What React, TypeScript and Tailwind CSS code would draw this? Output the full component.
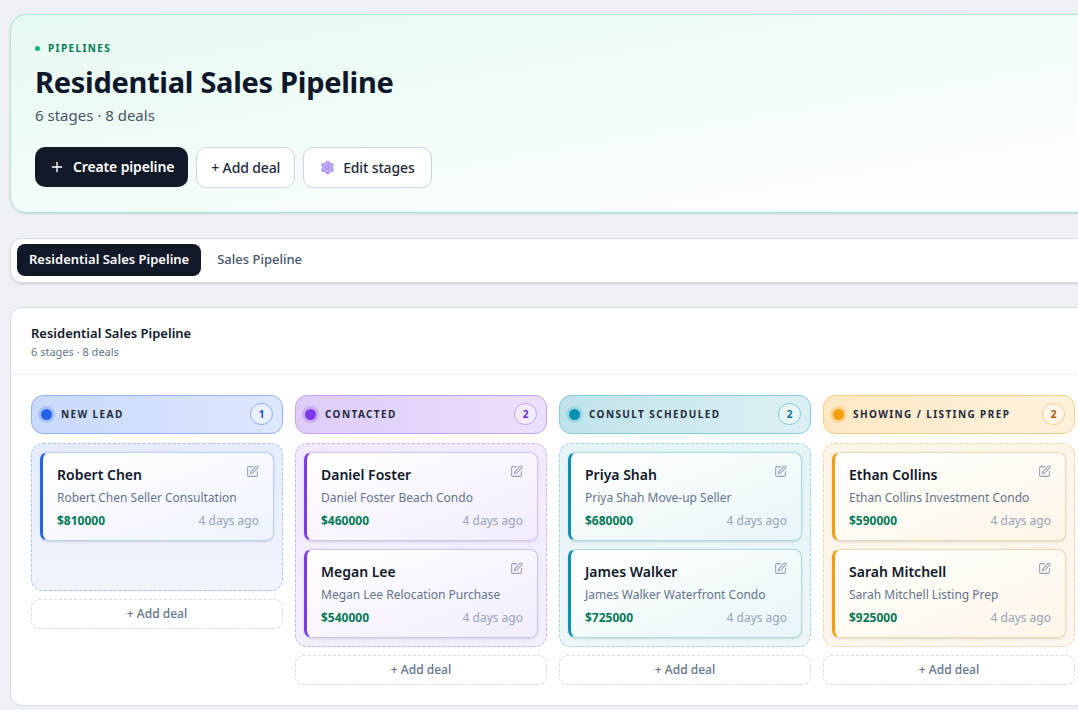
import { Plus, Settings, SquarePen } from "lucide-react";

type Deal = { name: string; title: string; amount: string };
type Stage = {
  label: string;
  deals: Deal[];
  head: string;
  dot: string;
  ring: string;
  badge: string;
  zone: string;
  card: string;
};

const stages: Stage[] = [
  {
    label: "NEW LEAD",
    head: "bg-gradient-to-r from-[#c9d9fb] to-[#dde7fd] border-[#8fb0f5]",
    dot: "bg-[#2563eb] ring-[#a9c1f7]",
    ring: "border-l-[#2563eb]",
    badge: "border-[#8fb0f5] text-[#1d4ed8]",
    zone: "border-[#a9c1f3] bg-gradient-to-b from-[#e4ecfc] to-[#f1f4fb]",
    card: "border-[#bccdf3] from-white to-[#eef3fd]",
    deals: [{ name: "Robert Chen", title: "Robert Chen Seller Consultation", amount: "$810000" }],
  },
  {
    label: "CONTACTED",
    head: "bg-gradient-to-r from-[#ddccf8] to-[#ebe0fb] border-[#c2a3f2]",
    dot: "bg-[#7c3aed] ring-[#c9aef5]",
    ring: "border-l-[#7c3aed]",
    badge: "border-[#c2a3f2] text-[#6d28d9]",
    zone: "border-[#c8b0f0] bg-gradient-to-b from-[#f1eafd] to-[#f3effb]",
    card: "border-[#d2c1f1] from-white to-[#f2ecfd]",
    deals: [
      { name: "Daniel Foster", title: "Daniel Foster Beach Condo", amount: "$460000" },
      { name: "Megan Lee", title: "Megan Lee Relocation Purchase", amount: "$540000" },
    ],
  },
  {
    label: "CONSULT SCHEDULED",
    head: "bg-gradient-to-r from-[#bfe3ea] to-[#dcf0f3] border-[#86cbd8]",
    dot: "bg-[#0891b2] ring-[#9fd6e1]",
    ring: "border-l-[#0891b2]",
    badge: "border-[#86cbd8] text-[#0e7490]",
    zone: "border-[#9fd3dd] bg-gradient-to-b from-[#e4f4f7] to-[#eef6f8]",
    card: "border-[#a9d7e0] from-white to-[#e8f5f8]",
    deals: [
      { name: "Priya Shah", title: "Priya Shah Move-up Seller", amount: "$680000" },
      { name: "James Walker", title: "James Walker Waterfront Condo", amount: "$725000" },
    ],
  },
  {
    label: "SHOWING / LISTING PREP",
    head: "bg-gradient-to-r from-[#fde8c4] to-[#fef1dc] border-[#f5cd87]",
    dot: "bg-[#f59e0b] ring-[#f9d596]",
    ring: "border-l-[#f59e0b]",
    badge: "border-[#f5cd87] text-[#b45309]",
    zone: "border-[#f0d39d] bg-gradient-to-b from-[#fdf5e8] to-[#fbf6ee]",
    card: "border-[#ecd9b4] from-white to-[#fdf5e7]",
    deals: [
      { name: "Ethan Collins", title: "Ethan Collins Investment Condo", amount: "$590000" },
      { name: "Sarah Mitchell", title: "Sarah Mitchell Listing Prep", amount: "$925000" },
    ],
  },
];

export default function App() {
  return (
    <div
      className="h-[710px] w-[1078px] overflow-hidden bg-[#edf1f5] text-[#0f172a]"
      style={{ fontFamily: '"Noto Sans", "Open Sans", sans-serif' }}
    >
      <div className="w-[1200px] px-[10px] pt-[14px]">
        <section className="rounded-[16px] border border-[#a7e8cf] bg-gradient-to-br from-[#e6faf1] via-[#f3fcf8] to-white px-6 pb-6 pt-[26px] shadow-sm">
          <div className="flex items-center gap-2 text-[10px] font-bold tracking-[0.14em] text-[#047857]">
            <span className="h-[5px] w-[5px] rounded-full bg-[#10b981]" />
            PIPELINES
          </div>
          <h1 className="mt-[6px] text-[29px] font-bold leading-[40px] tracking-[-0.01em]">Residential Sales Pipeline</h1>
          <p className="mt-[2px] text-[15px] text-[#475569]">6 stages · 8 deals</p>
          <div className="mt-[20px] flex gap-2">
            <button className="flex h-[40px] items-center gap-2 rounded-[10px] bg-[#111827] px-[14px] text-[14px] font-semibold tracking-[-0.01em] text-white">
              <Plus size={16} strokeWidth={2} />
              Create pipeline
            </button>
            <button className="h-[41px] rounded-[10px] border border-[#cbd5e1] bg-white px-[14px] text-[14px] font-medium tracking-[-0.01em] text-[#1e293b]">
              + Add deal
            </button>
            <button className="flex h-[41px] items-center gap-2 rounded-[10px] border border-[#cbd5e1] bg-white px-[16px] text-[14px] font-medium tracking-[-0.01em] text-[#1e293b]">
              <Settings size={15} className="fill-[#c4b5fd] text-[#a78bfa]" />
              Edit stages
            </button>
          </div>
        </section>

        <nav className="mt-[25px] flex h-[45px] items-center gap-1 rounded-[12px] border border-[#d5dce6] bg-white px-[6px] shadow-sm">
          <span className="rounded-[8px] bg-[#111827] px-3 py-[6px] text-[13px] font-semibold text-white">Residential Sales Pipeline</span>
          <span className="px-3 py-[6px] text-[13px] font-medium text-[#475569]">Sales Pipeline</span>
        </nav>

        <section className="mt-[24px] rounded-[12px] border border-[#d5dce6] bg-white">
          <div className="border-b border-[#eef1f5] px-5 pb-[13px] pt-[16px]">
            <h2 className="text-[13px] font-semibold">Residential Sales Pipeline</h2>
            <p className="mt-[1px] text-[11px] text-[#64748b]">6 stages · 8 deals</p>
          </div>
          <div className="flex gap-3 px-5 pt-[20px] pb-[20px]">
            {stages.map((s) => (
              <div key={s.label} className="w-[252px] shrink-0">
                <div className={`flex h-[39px] items-center gap-[9px] rounded-[12px] border px-[9px] ${s.head}`}>
                  <span className={`h-[11px] w-[11px] rounded-full ring-[3px] ${s.dot}`} />
                  <span className="flex-1 text-[10px] font-bold tracking-[0.14em] text-[#1e293b]">{s.label}</span>
                  <span className={`flex h-[22px] w-[23px] items-center justify-center rounded-full border bg-white/40 text-[10px] font-bold ${s.badge}`}>
                    {s.deals.length}
                  </span>
                </div>
                <div className={`mt-[9px] flex min-h-[148px] flex-col gap-2 rounded-[12px] border border-dashed p-[8px] ${s.zone}`}>
                  {s.deals.map((d) => (
                    <div
                      key={d.name}
                      className={`rounded-[8px] border border-l-[3px] bg-gradient-to-br px-[14px] pb-[10px] pt-[11px] shadow-sm ${s.card} ${s.ring}`}
                    >
                      <div className="flex items-start justify-between">
                        <span className="text-[14px] font-semibold">{d.name}</span>
                        <SquarePen size={13} className="mt-[1px] text-[#94a3b8]" />
                      </div>
                      <p className="mt-[4px] text-[12px] text-[#64748b]">{d.title}</p>
                      <div className="mt-[5px] flex items-center justify-between">
                        <span className="text-[12px] font-bold text-[#047857]">{d.amount}</span>
                        <span className="text-[12px] text-[#94a3b8]">4 days ago</span>
                      </div>
                    </div>
                  ))}
                </div>
                <div className="mt-[8px] flex h-[30px] items-center justify-center rounded-[8px] border border-dashed border-[#d5dce6] text-[12px] font-medium text-[#64748b]">
                  + Add deal
                </div>
              </div>
            ))}
          </div>
        </section>
      </div>
    </div>
  );
}
